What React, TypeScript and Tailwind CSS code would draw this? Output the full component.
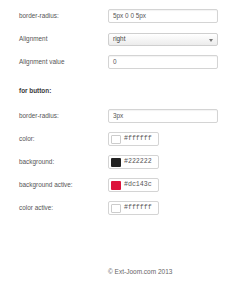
import React from "react";

const sans = { fontFamily: '"Liberation Sans", Arial, sans-serif' };

function Row({ label, children, className = "" }: { label: string; children: React.ReactNode; className?: string }) {
  return (
    <div className={`flex items-center h-[14px] ${className}`}>
      <div className="w-[89px] text-[6.4px] leading-none text-[#555]">{label}</div>
      {children}
    </div>
  );
}

function TextInput({ value }: { value: string }) {
  return (
    <div className="w-[110px] h-[14px] border border-[#d4d4d4] rounded-[2px] bg-white flex items-center pl-[4px] text-[6.4px] leading-none text-[#555] shadow-[inset_0_1px_1px_rgba(0,0,0,0.05)]">
      {value}
    </div>
  );
}

function ColorInput({ value, swatch, light }: { value: string; swatch: string; light?: boolean }) {
  return (
    <div className="w-[51px] h-[14px] border border-[#d4d4d4] rounded-[2px] bg-white flex items-center pl-[2px]">
      <div
        className={`w-[10px] h-[9px] rounded-[1px] ${light ? "border border-[#ccc]" : ""}`}
        style={{ backgroundColor: swatch }}
      />
      <span
        className="ml-[3px] text-[6.6px] leading-none text-[#555]"
        style={{ fontFamily: '"Liberation Mono", "Courier New", monospace' }}
      >
        {value}
      </span>
    </div>
  );
}

export default function App() {
  return (
    <div className="w-[250px] h-[284px] bg-white overflow-hidden pl-[19px]" style={sans}>
      <div className="pt-[9px]">
        <Row label="border-radius:">
          <TextInput value="5px 0 0 5px" />
        </Row>
        <Row label="Alignment" className="mt-[9px]">
          <div className="relative w-[110px] h-[13px] border border-[#cfcfcf] rounded-[2px] bg-gradient-to-b from-white to-[#ececec] flex items-center pl-[4px] text-[6.4px] leading-none text-[#444]">
            right
            <svg className="absolute right-[4px] top-[5px]" width="4" height="3" viewBox="0 0 4 3">
              <path d="M0 0H4L2 3Z" fill="#777" />
            </svg>
          </div>
        </Row>
        <Row label="Alignment value" className="mt-[9px]">
          <TextInput value="0" />
        </Row>
        <div className="mt-[18px] h-[8px] flex items-center text-[6.4px] leading-none font-bold text-[#3a3a3a]">
          for button:
        </div>
        <Row label="border-radius:" className="mt-[14px]">
          <TextInput value="3px" />
        </Row>
        <Row label="color:" className="mt-[9px]">
          <ColorInput value="#ffffff" swatch="#ffffff" light />
        </Row>
        <Row label="background:" className="mt-[9px]">
          <ColorInput value="#222222" swatch="#222222" />
        </Row>
        <Row label="background active:" className="mt-[9px]">
          <ColorInput value="#dc143c" swatch="#dc143c" />
        </Row>
        <Row label="color active:" className="mt-[9px]">
          <ColorInput value="#ffffff" swatch="#ffffff" light />
        </Row>
        <div className="mt-[53px] pl-[89px] h-[8px] flex items-center text-[6.5px] leading-none text-[#666]">
          © Ext-Joom.com 2013
        </div>
      </div>
    </div>
  );
}
